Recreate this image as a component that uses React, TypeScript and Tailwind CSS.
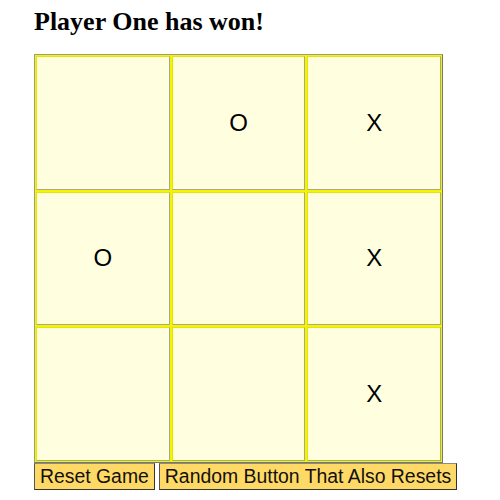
import type { JSX } from 'react';

const board: string[] = ['', 'O', 'X', 'O', '', 'X', '', '', 'X'];

const Cell = ({ value }: { value: string }): JSX.Element => (
  <div className="flex items-center justify-center border border-t-[#e6e600] border-l-[#e6e600] border-r-[#a8a890] border-b-[#a8a890] bg-[#ffffe0] text-[24px] text-black [font-family:'Liberation_Sans',Arial,sans-serif]">
    {value}
  </div>
);

export default function App(): JSX.Element {
  return (
    <div className="min-h-[500px] bg-white pl-[34px] pt-[7px]">
      <h1 className="text-[26px] leading-[29px] font-bold text-black [font-family:'Liberation_Serif','Times_New_Roman',serif]">
        Player One has won!
      </h1>
      <div className="mt-[18px] grid h-[409px] w-[409px] grid-cols-3 grid-rows-3 gap-[2px] border border-t-[#9a9a9a] border-l-[#9a9a9a] border-r-[#7a7a50] border-b-[#7a7a50] bg-[#f4f400] p-[1px]">
        {board.map((v, i) => (
          <Cell key={i} value={v} />
        ))}
      </div>
      <div className="flex gap-[4px] [font-family:'Liberation_Sans',Arial,sans-serif]">
        <button className="h-[27px] border border-t-[#8a8a8a] border-l-[#555] border-r-[#333] border-b-[#333] bg-[#ffd966] px-[5px] text-[19.4px] leading-none text-[#111]">
          Reset Game
        </button>
        <button className="h-[27px] border border-t-[#8a8a8a] border-l-[#555] border-r-[#333] border-b-[#333] bg-[#ffd966] px-[5px] text-[19.4px] leading-none text-[#111]">
          Random Button That Also Resets
        </button>
      </div>
    </div>
  );
}
